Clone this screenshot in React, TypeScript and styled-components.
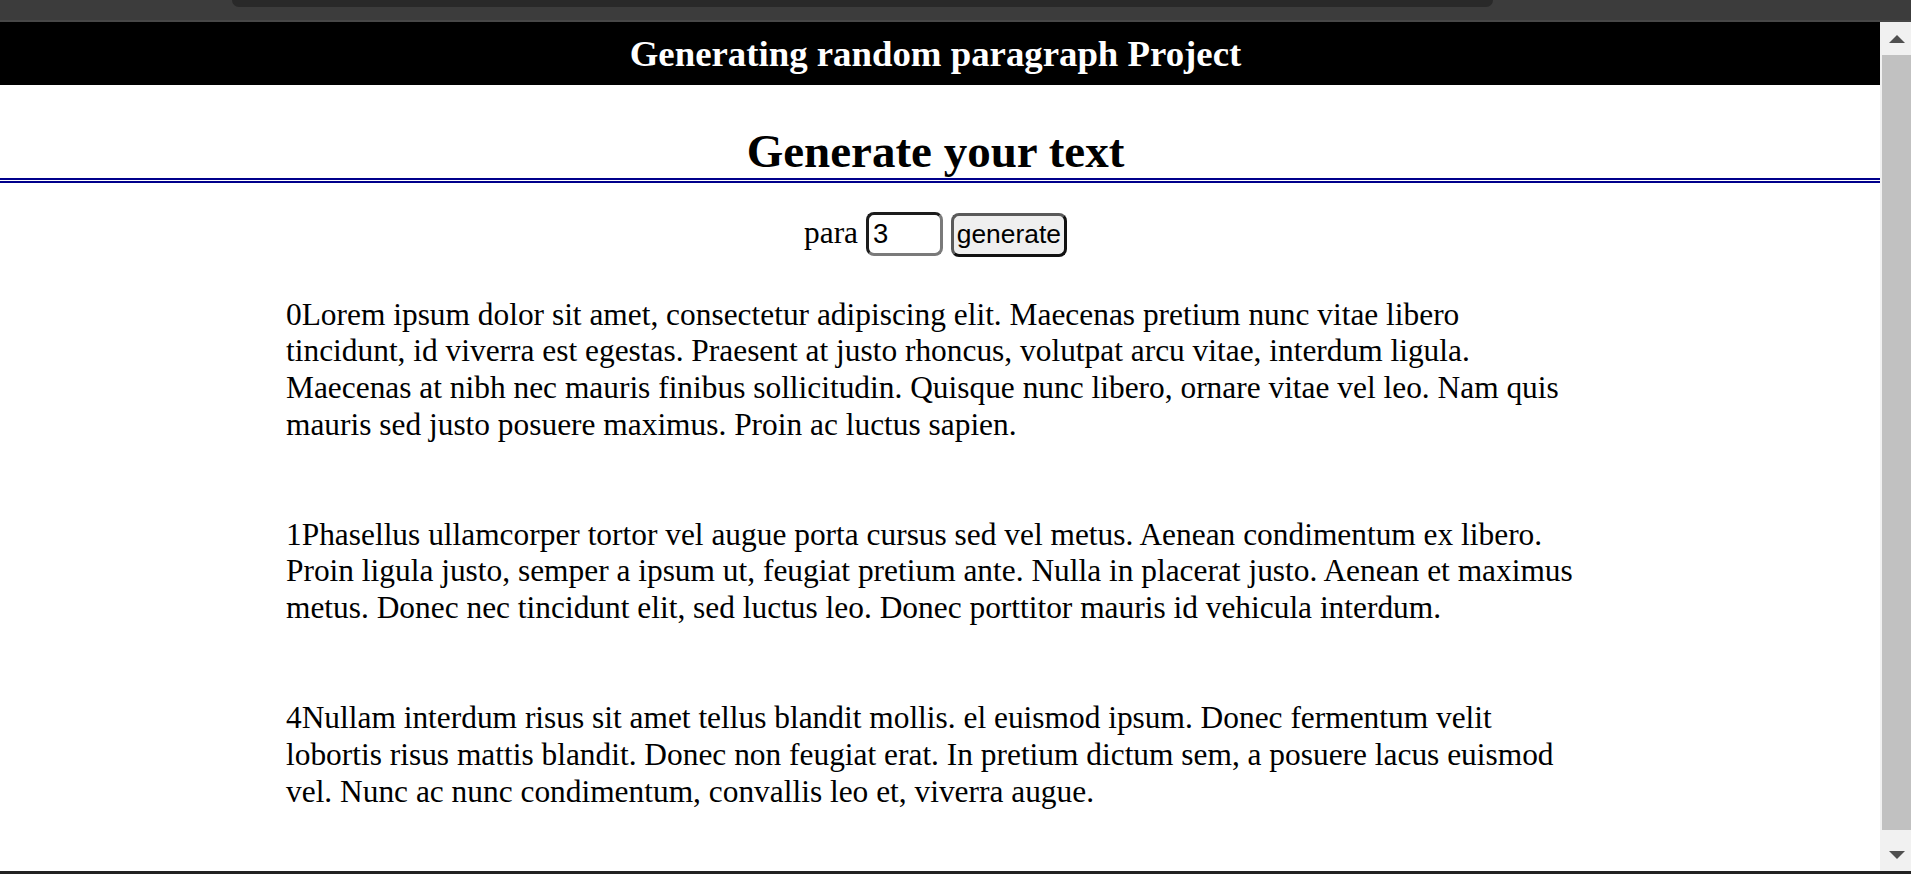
import React, { useState } from "react";
import styled, { createGlobalStyle } from "styled-components";

const GlobalStyle = createGlobalStyle`
  html, body {
    margin: 0;
    padding: 0;
    background: #ffffff;
    overflow: hidden;
  }
  body {
    font-family: "Liberation Serif", "Times New Roman", serif;
    color: #000000;
  }
  * { box-sizing: border-box; }
`;

const Frame = styled.div`
  width: 1911px;
  height: 874px;
  display: flex;
  flex-direction: column;
  overflow: hidden;
`;

const TopChrome = styled.div`
  height: 22px;
  flex: none;
  background: #3c3c3c;
  border-bottom: 2px solid #474747;
  display: flex;
  align-items: flex-start;
`;

const ChromeTab = styled.div`
  margin-left: 232px;
  width: 1261px;
  height: 7px;
  background: #292929;
  border-radius: 0 0 14px 14px;
`;

const Viewport = styled.div`
  flex: 1;
  min-height: 0;
  display: flex;
`;

const Main = styled.main`
  flex: 1;
  min-width: 0;
  overflow: hidden;
`;

const Header = styled.header`
  height: 63px;
  padding-right: 9px;
  background: #000000;
  display: flex;
  align-items: center;
  justify-content: center;
`;

const HeaderTitle = styled.h3`
  margin: 0;
  color: #ffffff;
  font-size: 36.8px;
  font-weight: bold;
  line-height: normal;
`;

const PageTitle = styled.h2`
  margin: 39px 0 0;
  padding-right: 9px;
  font-size: 47px;
  font-weight: bold;
  line-height: normal;
  text-align: center;
  border-bottom: 5px double #00008b;
`;

const Form = styled.form`
  margin-top: 29px;
  padding-right: 9px;
  text-align: center;
  font-size: 31.4px;
`;

const NumberInput = styled.input`
  width: 77px;
  height: 44px;
  padding: 0 4px;
  margin: 0;
  vertical-align: baseline;
  font-family: "Liberation Sans", Arial, sans-serif;
  font-size: 27.5px;
  color: #000000;
  background: #ffffff;
  border: 3px solid;
  border-color: #1c1c1c #7a7a7a #7a7a7a #1c1c1c;
  border-radius: 8px;
  outline: none;
  -moz-appearance: textfield;
  &::-webkit-outer-spin-button,
  &::-webkit-inner-spin-button {
    -webkit-appearance: none;
    margin: 0;
  }
`;

const GenerateButton = styled.button`
  height: 44px;
  padding: 0 3px;
  margin: 0;
  vertical-align: baseline;
  font-family: "Liberation Sans", Arial, sans-serif;
  font-size: 26.4px;
  color: #000000;
  background: #efefef;
  border: 3px solid;
  border-color: #5a5a5a #111111 #111111 #5a5a5a;
  border-radius: 8px;
  cursor: pointer;
`;

const Paragraphs = styled.section`
  margin: 40px 0 0 286px;
  width: 1296px;
  display: flex;
  flex-direction: column;
  gap: 73.4px;
`;

const Para = styled.p`
  margin: 0;
  font-size: 31.4px;
  line-height: 36.7px;
`;

const Scrollbar = styled.div`
  width: 31px;
  flex: none;
  background: #f1f1f1;
  display: flex;
  flex-direction: column;
`;

const ArrowButton = styled.div<{ $dir: "up" | "down" }>`
  height: 33px;
  flex: none;
  display: flex;
  align-items: center;
  justify-content: center;
  padding-left: 2px;
  &::after {
    content: "";
    width: 0;
    height: 0;
    border-left: 8px solid transparent;
    border-right: 8px solid transparent;
    ${(p) =>
      p.$dir === "up"
        ? "border-bottom: 8px solid #505050;"
        : "border-top: 8px solid #505050;"}
  }
`;

const Track = styled.div`
  flex: 1;
  padding-left: 2px;
`;

const Thumb = styled.div`
  height: 775px;
  background: #c1c1c1;
`;

const BottomBar = styled.div`
  height: 3px;
  flex: none;
  background: #222222;
`;

const paragraphs = [
  {
    id: 0,
    text: "Lorem ipsum dolor sit amet, consectetur adipiscing elit. Maecenas pretium nunc vitae libero tincidunt, id viverra est egestas. Praesent at justo rhoncus, volutpat arcu vitae, interdum ligula. Maecenas at nibh nec mauris finibus sollicitudin. Quisque nunc libero, ornare vitae vel leo. Nam quis mauris sed justo posuere maximus. Proin ac luctus sapien.",
  },
  {
    id: 1,
    text: "Phasellus ullamcorper tortor vel augue porta cursus sed vel metus. Aenean condimentum ex libero. Proin ligula justo, semper a ipsum ut, feugiat pretium ante. Nulla in placerat justo. Aenean et maximus metus. Donec nec tincidunt elit, sed luctus leo. Donec porttitor mauris id vehicula interdum.",
  },
  {
    id: 4,
    text: "Nullam interdum risus sit amet tellus blandit mollis. el euismod ipsum. Donec fermentum velit lobortis risus mattis blandit. Donec non feugiat erat. In pretium dictum sem, a posuere lacus euismod vel. Nunc ac nunc condimentum, convallis leo et, viverra augue.",
  },
];

export default function App() {
  const [count, setCount] = useState("3");
  return (
    <>
      <GlobalStyle />
      <Frame>
        <TopChrome>
          <ChromeTab />
        </TopChrome>
        <Viewport>
          <Main>
            <Header>
              <HeaderTitle>Generating random paragraph Project</HeaderTitle>
            </Header>
            <PageTitle>Generate your text</PageTitle>
            <Form onSubmit={(e) => e.preventDefault()}>
              para{" "}
              <NumberInput
                type="number"
                value={count}
                onChange={(e) => setCount(e.target.value)}
              />{" "}
              <GenerateButton type="submit">generate</GenerateButton>
            </Form>
            <Paragraphs>
              {paragraphs.map((p) => (
                <Para key={p.id}>{`${p.id}${p.text}`}</Para>
              ))}
            </Paragraphs>
          </Main>
          <Scrollbar>
            <ArrowButton $dir="up" />
            <Track>
              <Thumb />
            </Track>
            <ArrowButton $dir="down" />
          </Scrollbar>
        </Viewport>
        <BottomBar />
      </Frame>
    </>
  );
}
